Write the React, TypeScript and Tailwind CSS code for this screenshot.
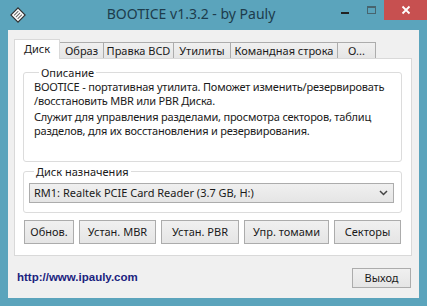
import React from 'react';

const tabs = [
  { label: 'Диск', w: 'w-[46px]' },
  { label: 'Образ', w: 'w-[45px]' },
  { label: 'Правка BCD', w: 'w-[71px]' },
  { label: 'Утилиты', w: 'w-[58px]' },
  { label: 'Командная строка', w: 'w-[108px]' },
  { label: 'О...', w: 'w-[39px]' },
];

const buttons = [
  { label: 'Обнов.', w: 'w-[50px]' },
  { label: 'Устан. MBR', w: 'w-[77px]' },
  { label: 'Устан. PBR', w: 'w-[78px]' },
  { label: 'Упр. томами', w: 'w-[85px]' },
  { label: 'Секторы', w: 'w-[67px]' },
];

const AppIcon = () => (
  <svg width="16" height="16" viewBox="0 0 16 16">
    <g transform="rotate(-45 8 8)">
      <rect x="3" y="3" width="10" height="10" fill="#fff" stroke="#333" strokeWidth="1.2" />
      <line x1="5" y1="5.5" x2="11" y2="5.5" stroke="#666" strokeWidth="1" />
      <line x1="5" y1="8" x2="11" y2="8" stroke="#666" strokeWidth="1" />
      <line x1="5" y1="10.5" x2="11" y2="10.5" stroke="#666" strokeWidth="1" />
    </g>
  </svg>
);

const WinButton = ({ label, w, h }: { label: string; w: string; h: string }) => (
  <div
    className={`${w} ${h} flex items-center justify-center whitespace-nowrap border border-[#acacac] bg-gradient-to-b from-[#f0f0f0] to-[#e5e5e5] text-[11px] text-[#1a1a1a]`}
  >
    {label}
  </div>
);

export default function App() {
  return (
    <div
      className="w-[427px] h-[306px] bg-[#5ba4bc] px-[8px] pb-[8px] flex flex-col"
      style={{ fontFamily: '"Noto Sans", "Segoe UI", sans-serif' }}
    >
      {/* title bar */}
      <div className="h-[30px] flex items-start shrink-0">
        <div className="mt-[7px] ml-[2px] w-[16px]">
          <AppIcon />
        </div>
        <div className="flex-1 text-center pt-[4px] pl-[24px] text-[14px] leading-[20px] text-[#1d3c4c] whitespace-nowrap">
          BOOTICE v1.3.2 - by Pauly
        </div>
        <div className="flex items-start">
          <div className="w-[26px] h-[20px] flex items-center justify-center">
            <div className="w-[8px] h-[2px] bg-[#222] mt-[6px]" />
          </div>
          <div className="w-[26px] h-[20px] flex items-center justify-center">
            <div className="w-[9px] h-[8px] border border-[#3b3b3b] border-t-2 opacity-60" />
          </div>
          <div className="w-[43px] h-[20px] bg-[#c75050] flex items-center justify-center mr-[-8px]">
            <svg width="10" height="10" viewBox="0 0 10 10">
              <path d="M1.5 1.5 L8.5 8.5 M8.5 1.5 L1.5 8.5" stroke="#fff" strokeWidth="1.8" />
            </svg>
          </div>
        </div>
      </div>

      {/* client area */}
      <div className="flex-1 bg-[#f0f0f0] flex flex-col pt-[9px] pb-[10px]">
        <div className="ml-[6px] w-[398px] flex flex-col">
          <div className="h-[20px] flex items-end">
            {tabs.map((t, i) =>
              i === 0 ? (
                <div
                  key={t.label}
                  className={`${t.w} h-[20px] relative z-10 bg-white border border-b-0 border-[#d9d9d9] flex items-center justify-center whitespace-nowrap text-[11px] text-[#1a1a1a]`}
                >
                  {t.label}
                </div>
              ) : (
                <div
                  key={t.label}
                  className={`${t.w} h-[17px] ml-[-1px] border border-b-0 border-[#acacac] bg-gradient-to-b from-[#f0f0f0] to-[#e5e5e5] flex items-center justify-center whitespace-nowrap text-[11px] text-[#1a1a1a]`}
                >
                  {t.label}
                </div>
              ),
            )}
          </div>
          <div className="mt-[-1px] h-[198px] bg-white border border-[#d9d9d9] flex flex-col pl-[8px] pr-[9px] pt-[6px]">
            <fieldset className="border border-[#dcdcdc] rounded-[3px] pl-[10px] pb-[23px]">
              <legend className="ml-[5px] px-[2px] text-[11px] leading-[15px] text-[#1a1a1a]">Описание</legend>
              <div className="text-[11px] leading-[14px] tracking-[-0.2px] text-[#1a1a1a] whitespace-nowrap">
                <div>BOOTICE - портативная утилита. Поможет изменить/резервировать</div>
                <div>/восстановить MBR или PBR Диска.</div>
                <div className="mt-[2px]">Служит для управления разделами, просмотра секторов, таблиц</div>
                <div>разделов, для их восстановления и резервирования.</div>
              </div>
            </fieldset>
            <fieldset className="mt-[2px] border border-[#dcdcdc] rounded-[3px] pl-[5px] pr-[7px] pb-[9px]">
              <legend className="ml-[5px] px-[2px] text-[11px] leading-[15px] text-[#1a1a1a]">Диск назначения</legend>
              <div className="mt-[4px] h-[20px] border border-[#acacac] bg-gradient-to-b from-[#f0f0f0] to-[#e5e5e5] flex items-center pl-[4px] pr-[5px] text-[11px] text-[#1a1a1a] whitespace-nowrap">
                <span className="flex-1">RM1: Realtek PCIE Card Reader (3.7 GB, H:)</span>
                <svg width="9" height="6" viewBox="0 0 9 6">
                  <path d="M1 1 L4.5 4.5 L8 1" fill="none" stroke="#444" strokeWidth="1.5" />
                </svg>
              </div>
            </fieldset>
            <div className="mt-[7px] ml-[1px] flex gap-[5px]">
              {buttons.map((b) => (
                <WinButton key={b.label} label={b.label} w={b.w} h="h-[24px]" />
              ))}
            </div>
          </div>
        </div>
        <div className="mt-[12px] flex items-center pl-[9px] pr-[8px]">
          <a
            className="flex-1 text-[11.5px] font-bold text-[#1b237f]"
            style={{ fontFamily: '"Liberation Sans", Arial, sans-serif' }}
          >
            http://www.ipauly.com
          </a>
          <WinButton label="Выход" w="w-[59px]" h="h-[20px]" />
        </div>
      </div>
    </div>
  );
}
